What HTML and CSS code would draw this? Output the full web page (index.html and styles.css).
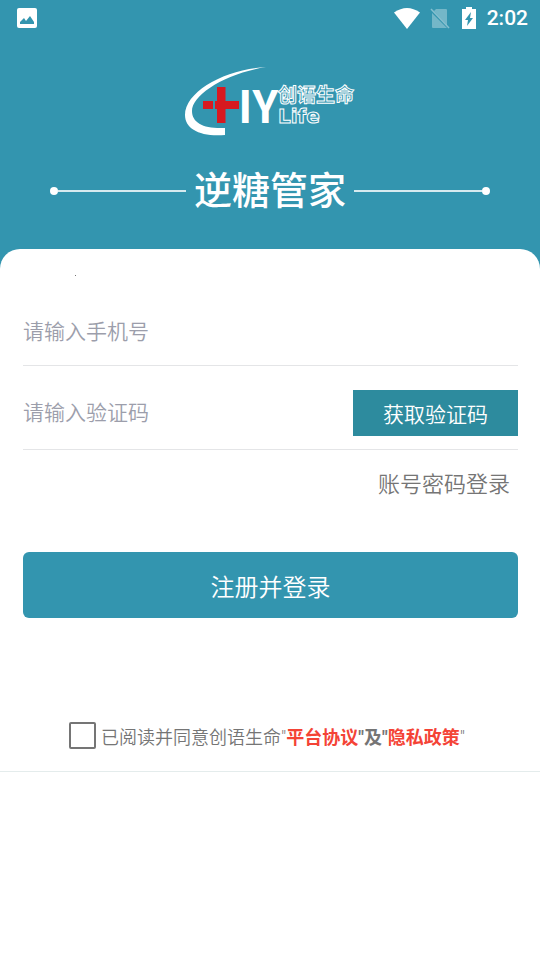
FILE: index.html
```html
<!DOCTYPE html>
<html lang="zh-CN">
<head>
<meta charset="utf-8">
<meta name="viewport" content="width=device-width, initial-scale=1">
<title>逆糖管家</title>
<link rel="stylesheet" href="styles.css">
</head>
<body>
<header class="hero">
  <div class="status">
    <svg class="status-photo" width="20" height="20" viewBox="0 0 20 20" aria-hidden="true"><rect width="20" height="20" rx="2" fill="#fff"/><path d="M3 16v-2l4-4 2 3 4-5 4 6v2z" fill="#3395af"/></svg>
    <svg width="26" height="21" viewBox="0 0 26 21" aria-hidden="true"><path d="M0 4.500Q13-4.500 26 4.500L13 21z" fill="#fff"/></svg>
    <svg class="status-sim" width="20" height="21" viewBox="0 0 20 21" aria-hidden="true"><path d="M6 1h10q1 0 1 1v15L4 3zM2 5l15 15H3q-1 0-1-1z" fill="#fff" opacity=".32"/><path d="M1 1l18 19" stroke="#fff" stroke-width="1.500" opacity=".4"/></svg>
    <svg class="status-battery" width="14" height="22" viewBox="0 0 14 22" aria-hidden="true"><path d="M4 0h6v2h4v20H0V2h4z" fill="#fff"/><path d="M9 5L3 13h3l-1 6 6-8H8z" fill="#3395af"/></svg>
    <span class="clock">2:02</span>
  </div>
  <svg class="logo" width="172" height="70" viewBox="14 11 172 70" role="img" aria-label="创语生命 Life">
    <path d="M96 12C56 14 15 36 15 60C15 74 30 82 55 80V73C34 74 22 68 22 56C22 40 54 19 96 12z" fill="#fff"/>
    <path d="M33 46h10v8H33zM47 32h8.500v14H69v8H55.500v14H47V54h-2v-8h2z" fill="#d71920"/>
    <text class="logo-main" x="68" y="68">IY</text>
    <text class="logo-cn" x="108" y="47">创语生命</text>
    <text class="logo-en" x="108" y="68">Life</text>
  </svg>
  <div class="title-row">
    <span class="rule rule-left"></span>
    <h1>逆糖管家</h1>
    <span class="rule rule-right"></span>
  </div>
</header>
<main class="sheet">
  <span class="speck"></span>
  <form>
    <div class="field">
      <input type="tel" aria-label="手机号" placeholder="请输入手机号">
    </div>
    <div class="field field-code">
      <input type="text" aria-label="验证码" placeholder="请输入验证码">
      <button type="button" class="code-button">获取验证码</button>
    </div>
    <a class="switch" href="#password">账号密码登录</a>
    <button type="submit" class="submit">注册并登录</button>
  </form>
  <div class="agreement">
    <input type="checkbox" id="agree">
    <label for="agree">已阅读并同意创语生命"<b><a href="#terms">平台协议</a>"及"<a href="#privacy">隐私政策</a></b>"</label>
  </div>
</main>
</body>
</html>
```

FILE: styles.css
```css
* {
  box-sizing: border-box;
}

body {
  margin: 0;
  background: #3395af;
  color: #757575;
  font-family: Roboto, "Noto Sans CJK SC", sans-serif;
  font-weight: 350;
}

a {
  color: inherit;
  text-decoration: none;
}

button,
input {
  font: inherit;
}

.hero {
  display: flex;
  flex-direction: column;
  align-items: center;
  height: 249px;
  color: #fff;
}

.status {
  display: flex;
  align-items: center;
  align-self: stretch;
  height: 36px;
  padding: 0 12px 0 17px;
}

.status-photo {
  margin-right: auto;
}

.status-sim {
  margin: 0 12px 0 10px;
}

.clock {
  margin-left: 11px;
  font-size: 21px;
  font-weight: 500;
}

.logo {
  margin-top: 30px;
}

.logo-main {
  fill: #fff;
  font: bold 44px "Noto Sans CJK SC", sans-serif;
}

.logo-cn,
.logo-en {
  fill: #3395af;
  stroke: #fff;
  stroke-width: 1px;
}

.logo-cn {
  font: bold 19px "Noto Sans CJK SC", sans-serif;
}

.logo-en {
  font: bold 20px "DejaVu Sans", sans-serif;
}

.title-row {
  display: flex;
  align-items: center;
  align-self: stretch;
  gap: 8px;
  margin-top: 27px;
  padding: 0 50px;
}

h1 {
  margin: 0;
  font-size: 38px;
  font-weight: 500;
  line-height: 56px;
}

.rule {
  display: flex;
  align-items: center;
  flex: 1;
}

.rule::before {
  content: "";
  flex: 1;
  order: 1;
  height: 2px;
  background: #d6eaef;
}

.rule::after {
  content: "";
  width: 8px;
  height: 8px;
  border-radius: 50%;
  background: #fff;
}

.rule-right::after {
  order: 2;
}

.sheet {
  position: relative;
  min-height: calc(100vh - 249px);
  padding-top: 48px;
  border-radius: 20px 20px 0 0;
  background: #fff;
}

.speck {
  position: absolute;
  top: 26px;
  left: 75px;
  width: 1px;
  height: 1px;
  background: #757575;
}

form {
  display: flex;
  flex-direction: column;
  padding: 0 22px 0 23px;
}

.field {
  display: flex;
  align-items: center;
  height: 69px;
  padding-top: 2px;
  border-bottom: 1px solid #e4e5e7;
}

.field-code {
  height: 84px;
  padding-top: 10px;
}

.field input {
  flex: 1;
  min-width: 0;
  padding: 0;
  border: 0;
  outline: 0;
  background: transparent;
  font-size: 21px;
}

.field input::placeholder {
  color: #9c9eab;
  opacity: 1;
}

.code-button {
  width: 165px;
  height: 46px;
  padding: 0;
  border: 0;
  background: #2d8b9e;
  color: #fff;
  font-size: 21px;
}

.switch {
  align-self: flex-end;
  margin: 18px 8px 0 0;
  font-size: 22px;
  line-height: 34px;
}

.submit {
  height: 66px;
  margin-top: 50px;
  border: 0;
  border-radius: 6px;
  background: #3395af;
  color: #fff;
  font-size: 24px;
}

.agreement {
  display: flex;
  align-items: center;
  justify-content: center;
  gap: 5px;
  height: 72px;
  margin-top: 82px;
  padding-right: 6px;
  border-bottom: 1px solid #e4ecec;
  font-size: 18px;
}

.agreement input {
  width: 27px;
  height: 27px;
  margin: 0;
  border: 2px solid #757575;
  border-radius: 2px;
  appearance: none;
}

.agreement input:checked {
  background: #3395af;
}

.agreement b {
  font-weight: 700;
}

.agreement a {
  color: #f44336;
}
```
